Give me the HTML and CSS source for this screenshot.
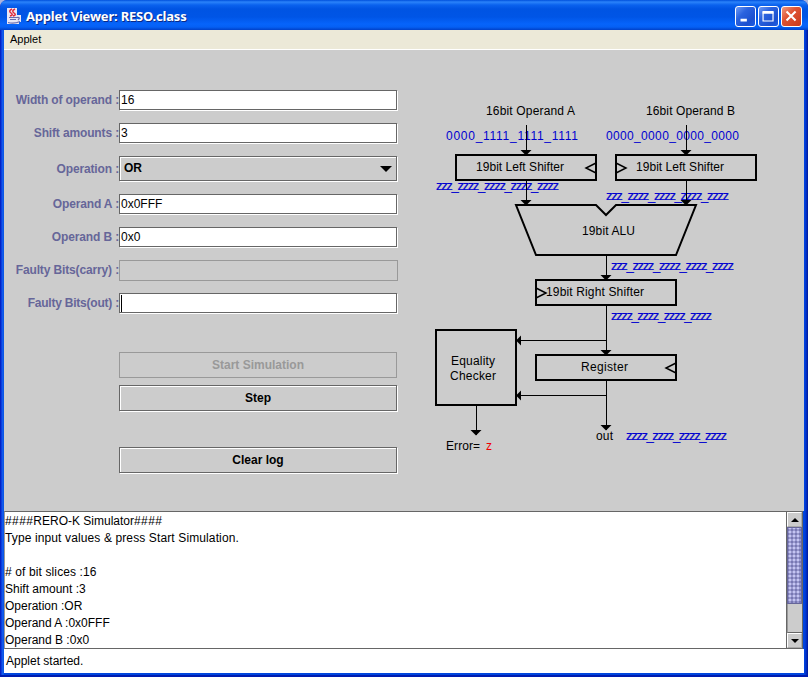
FILE: index.html
```html
<!DOCTYPE html>
<html lang="en">
<head>
<meta charset="utf-8">
<title>Applet Viewer: RESO.class</title>
<link rel="stylesheet" href="styles.css">
</head>
<body>
<div class="window">
  <header class="titlebar">
    <svg class="logo" width="16" height="17" viewBox="0 0 16 17">
      <path d="M1 0H11V7H15V14H13V16H1Z" fill="#e9e6f4"/>
      <path d="M6 1Q2 3 5 5T4 8M9 1Q5 3 8 5T7 8" fill="none" stroke="#e02b3b" stroke-width="1.5"/>
      <path d="M3 9.5H11M4 11.500H10M2 14.500Q8 16 14 13.500M11 9.500Q15 9 12 12" fill="none" stroke="#696caf" stroke-width="1.2"/>
    </svg>
    <span class="title">Applet Viewer: RESO.class</span>
    <div class="controls">
      <svg class="control" viewBox="0 0 21 21"><path d="M5 14.500H12" stroke="#fff" stroke-width="3"/></svg>
      <svg class="control" viewBox="0 0 21 21"><path d="M4.500 5.500H15.500V15.500H4.500Z" fill="none" stroke="#fff" stroke-width="1.300"/><path d="M4 6H16" stroke="#fff" stroke-width="3"/></svg>
      <svg class="control close" viewBox="0 0 21 21"><path d="M5 5L15 15M15 5L5 15" stroke="#fff" stroke-width="2.300"/></svg>
    </div>
  </header>
  <nav class="menubar"><span>Applet</span></nav>
  <main class="applet">
    <form class="form">
      <div class="row"><label>Width of operand :</label><div class="field">16</div></div>
      <div class="row"><label>Shift amounts :</label><div class="field">3</div></div>
      <div class="row tall"><label>Operation :</label><div class="field combo"><span>OR</span><svg width="12" height="6" viewBox="0 0 12 6"><path d="M0 0H12L6 6Z"/></svg></div></div>
      <div class="row"><label>Operand A :</label><div class="field">0x0FFF</div></div>
      <div class="row"><label>Operand B :</label><div class="field">0x0</div></div>
      <div class="row"><label>Faulty Bits(carry) :</label><div class="field disabled"></div></div>
      <div class="row"><label class="tight">Faulty Bits(out) :</label><div class="field"><i class="caret"></i></div></div>
      <div class="buttons">
        <button type="button" class="button" disabled>Start Simulation</button>
        <button type="button" class="button">Step</button>
        <button type="button" class="button clear">Clear log</button>
      </div>
    </form>
    <svg class="diagram" width="394" height="461" viewBox="410 50 394 461">
      <defs>
        <path id="down" d="M-5.500 -5H5.500L0 .5Z"/>
        <path id="left" d="M5 -5V5L0 0Z"/>
      </defs>
      <g class="signal">
        <text x="446" y="140" textLength="132">0000_1111_1111_1111</text>
        <text x="606" y="140" textLength="133">0000_0000_0000_0000</text>
      </g>
      <g class="signal floating">
        <text x="436" y="190" textLength="123">zzz_zzzz_zzzz_zzzz_zzzz</text>
        <text x="606" y="200" textLength="123">zzz_zzzz_zzzz_zzzz_zzzz</text>
        <text x="611" y="270" textLength="123">zzz_zzzz_zzzz_zzzz_zzzz</text>
        <text x="611" y="320" textLength="101">zzzz_zzzz_zzzz_zzzz</text>
        <text x="626" y="440" textLength="101">zzzz_zzzz_zzzz_zzzz</text>
      </g>
      <g class="thin">
        <path d="M526.500 125V155M686.500 125V155M526.500 180V205M686.500 180V205M606.500 255V280M606.500 305V355M606.500 380V430M606 340.500H517M606 395.500H517M476.500 405V435"/>
      </g>
      <g class="thick">
        <path d="M456 155H596V180H456ZM616 155H756V180H616ZM536 280H676V305H536ZM536 355H676V380H536ZM436 330H516V405H436Z"/>
        <path d="M516 205H596L606 215L616 205H696L676 255H536Z"/>
        <path class="clock" d="M596 163L586 168L596 173M616 163L626 168L616 173M536 288L546 293L536 298M676 363L666 368L676 373"/>
      </g>
      <use href="#down" x="526" y="155"/><use href="#down" x="686" y="155"/>
      <use href="#down" x="526" y="205"/><use href="#down" x="686" y="205"/>
      <use href="#down" x="606" y="280"/><use href="#down" x="606" y="355"/>
      <use href="#down" x="606" y="430"/><use href="#down" x="476" y="435"/>
      <use href="#left" x="516" y="340.500"/><use href="#left" x="516" y="395.500"/>
      <g class="caption">
        <text x="486" y="115" textLength="89">16bit Operand A</text>
        <text x="646" y="115" textLength="89">16bit Operand B</text>
        <text x="476" y="171" textLength="88">19bit Left Shifter</text>
        <text x="636" y="171" textLength="88">19bit Left Shifter</text>
        <text x="582" y="235" textLength="53">19bit ALU</text>
        <text x="546" y="296" textLength="98">19bit Right Shifter</text>
        <text x="581" y="371" textLength="47">Register</text>
        <text x="451" y="365" textLength="44">Equality</text>
        <text x="450" y="380" textLength="46">Checker</text>
        <text x="446" y="450" textLength="34">Error=</text>
        <text x="486" y="450" class="error">z</text>
        <text x="596" y="440" textLength="17">out</text>
      </g>
    </svg>
  </main>
  <section class="log">
    <div class="lines">
      <p><span class="hash">####</span>RERO-K Simulator<span class="hash">####</span></p>
      <p class="prompt">Type input values &amp; press Start Simulation.</p>
      <p>&nbsp;</p>
      <p class="prompt"># of bit slices :16</p>
      <p>Shift amount :3</p>
      <p>Operation :OR</p>
      <p>Operand A :0x0FFF</p>
      <p>Operand B :0x0</p>
    </div>
    <div class="scrollbar">
      <div class="arrow"><svg width="8" height="4" viewBox="0 0 8 4"><path d="M0 4H8L4 0Z"/></svg></div>
      <div class="thumb"></div>
      <div class="track"></div>
      <div class="arrow"><svg width="8" height="4" viewBox="0 0 8 4"><path d="M0 0H8L4 4Z"/></svg></div>
    </div>
  </section>
  <footer class="status"><span>Applet started.</span></footer>
</div>
</body>
</html>
```
FILE: styles.css
```css
* { box-sizing: border-box; }
body {
  margin: 0;
  background: #a9b4de;
  font: 12px/17px "Liberation Sans", Arial, sans-serif;
  color: #000;
}
.window {
  width: 808px;
  height: 677px;
  display: flex;
  flex-direction: column;
  background: linear-gradient(90deg, #0014b0 0, #0831d9 1px, #1667f0 3px, #0046dd 4px, #0046dd 804px, #003ddc 805px, #0026b5 807px, #001590 808px);
  padding: 0 4px 2px;
  border-bottom: 2px solid #001cb0;
  border-radius: 7px 7px 0 0;
  overflow: hidden;
}
.titlebar {
  flex: none;
  height: 30px;
  margin: 0 -4px;
  padding: 3px 6px 0;
  display: flex;
  align-items: center;
  border-radius: 7px 7px 0 0;
  background: linear-gradient(#0050dc 0, #2b83fa 2px, #0a62ee 5px, #0054e3 9px, #0055e6 17px, #0664fb 24px, #0560f4 27px, #0041c9 30px);
}
.logo { flex: none; }
.title {
  margin-left: 4px;
  color: #fff;
  font: bold 13px/17px "Noto Sans", sans-serif;
  letter-spacing: -.2px;
  text-shadow: 1px 1px #0a2a86;
  white-space: nowrap;
}
.controls { margin-left: auto; display: flex; gap: 2px; }
.control {
  width: 21px;
  height: 21px;
  border: 1px solid #fff;
  border-radius: 3px;
  background: linear-gradient(135deg, #6f9bf5, #2b63df 35%, #1c50cf 75%, #1c5ee5);
}
.close { background: linear-gradient(135deg, #ef9a80, #df5333 40%, #c9391b); }
.menubar {
  flex: none;
  height: 20px;
  padding: 0 6px;
  background: #ece9d8;
  border-bottom: 1px solid #fff;
  font-size: 11px;
  line-height: 19px;
}
.applet { flex: none; height: 461px; display: flex; background: #ccc; }
.form { width: 406px; padding: 40px 12px 0 0; display: flex; flex-direction: column; gap: 12px; }
.row { display: flex; height: 21px; }
.tall { height: 26px; }
.row label {
  width: 115px;
  text-align: right;
  white-space: nowrap;
  color: #669;
  font-weight: bold;
  letter-spacing: -.14px;
  align-self: center;
}
.row .tight { letter-spacing: -.22px; }
.field {
  width: 278px;
  position: relative;
  border: 1px solid #666;
  background: #fff;
  box-shadow: 1px 1px #fff;
  margin-bottom: 1px;
  padding-left: 1px;
  line-height: 19px;
}
.combo {
  display: flex;
  justify-content: space-between;
  align-items: center;
  padding: 0 4px 0 4px;
  background: #ccc;
  box-shadow: 1px 1px #fff, inset 1px 1px #fff;
  font-weight: bold;
}
.disabled { width: 279px; margin-bottom: 0; background: #ccc; border-color: #999; box-shadow: none; }
.caret { display: block; width: 1px; height: 17px; margin-top: 1px; background: #000; }
.buttons { margin: 26px 0 0 115px; display: flex; flex-direction: column; gap: 7px; }
.button {
  width: 278px;
  height: 26px;
  padding: 0;
  border: 1px solid #666;
  border-radius: 0;
  background: #ccc;
  box-shadow: 1px 1px #fff, inset 1px 1px #fff;
  color: #000;
  font: bold 12px "Liberation Sans", Arial, sans-serif;
}
.button:disabled { color: #999; border-color: #999; box-shadow: none; }
.clear { margin-top: 29px; }
.diagram { flex: none; font: 12px "Liberation Sans", Arial, sans-serif; }
.signal { fill: #0000d0; }
.floating { font-size: 13px; stroke: #0000d0; stroke-width: .15px; }
.thin { fill: none; stroke: #000; stroke-width: 1; }
.thick { fill: none; stroke: #000; stroke-width: 2; }
.thick .clock { stroke-width: 1.5; }
.error { fill: #f00000; }
.log {
  flex: none;
  height: 138px;
  display: flex;
  background: #fff;
  border: 1px solid #666;
  margin-right: 1px;
  border-left-color: #999;
}
.lines { flex: 1; }
.lines p { margin: 0; height: 17px; line-height: 18px; white-space: pre; }
.hash { letter-spacing: .4px; }
.prompt { letter-spacing: .12px; }
.scrollbar {
  width: 16px;
  display: flex;
  flex-direction: column;
  border-left: 1px solid #666;
  background: #ccc;
}
.arrow {
  height: 15px;
  display: flex;
  align-items: center;
  justify-content: center;
  border: 1px solid #fff;
  border-right-color: #aaa;
  border-bottom-color: #aaa;
}
.thumb {
  height: 77px;
  border: 1px solid #669;
  background: conic-gradient(#7777b4 25%, #99c 0 50%, #c4c4f4 0 75%, #99c 0) 1px 1px / 4px 4px;
}
.track { flex: 1; border-left: 1px solid #999; border-bottom: 1px solid #666; }
.status { flex: none; height: 24px; padding: 1px 0 0 2px; background: #fff; line-height: 23px; }
```
